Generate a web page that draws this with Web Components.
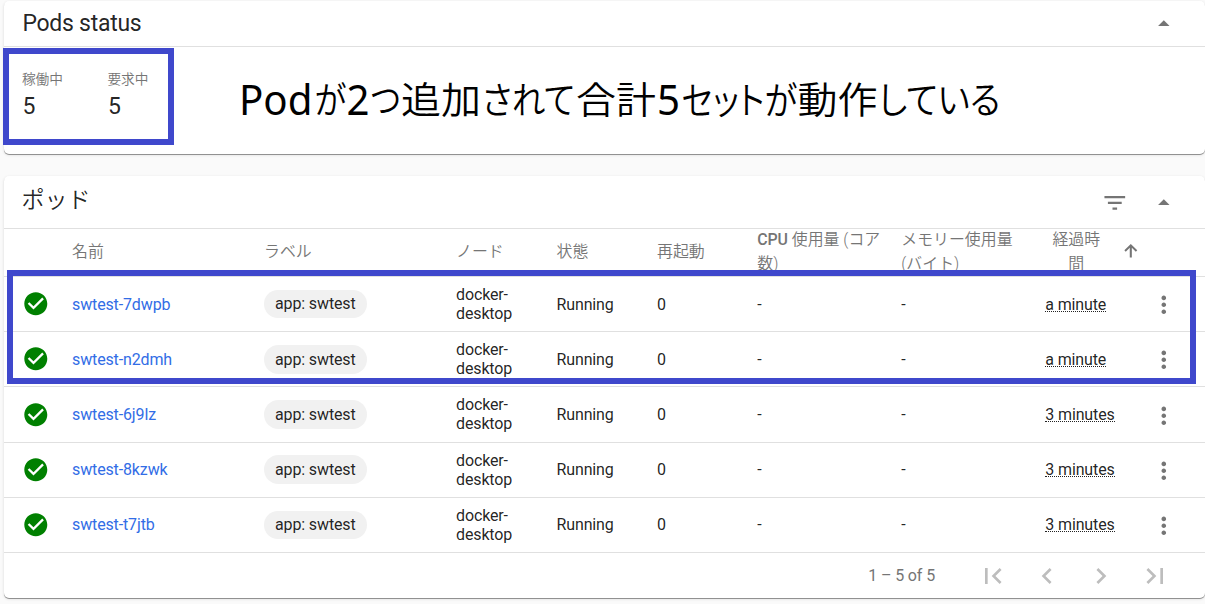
<!DOCTYPE html>
<html lang="ja">
<head>
<meta charset="utf-8">
<title>Pods</title>
<style>
html,body{margin:0;height:100%;overflow:hidden}
body{background:#fafafa;font-family:Roboto,"Noto Sans CJK JP",sans-serif;font-size:16px;letter-spacing:-.13px;color:rgba(0,0,0,.87)}
</style>
</head>
<body>
<kd-page></kd-page>
<script>
const define = (name, html, setup) => customElements.define(name, class extends HTMLElement {
  constructor() {
    super();
    this.attachShadow({mode: 'open'});
  }
  connectedCallback() {
    this.shadowRoot.innerHTML = html(this);
    if (setup) setup(this.shadowRoot);
  }
});

const ICONS = {
  check: 'M12 2C6.48 2 2 6.48 2 12s4.48 10 10 10 10-4.48 10-10S17.52 2 12 2zm-2 15l-5-5 1.41-1.41L10 14.17l7.59-7.59L19 8l-9 9z',
  up: 'M7 14l5-5 5 5z',
  filter: 'M10 18h4v-2h-4v2zM3 6v2h18V6H3zm3 7h12v-2H6v2z',
  more: 'M12 8c1.1 0 2-.9 2-2s-.9-2-2-2-2 .9-2 2 .9 2 2 2zm0 2c-1.1 0-2 .9-2 2s.9 2 2 2 2-.9 2-2-.9-2-2-2zm0 6c-1.1 0-2 .9-2 2s.9 2 2 2 2-.9 2-2-.9-2-2-2z',
  first: 'M18.41 16.59L13.82 12l4.59-4.59L17 6l-6 6 6 6zM6 6h2v12H6z',
  prev: 'M15.41 7.41L14 6l-6 6 6 6 1.41-1.41L10.83 12z',
  next: 'M10 6L8.59 7.41 13.17 12l-4.58 4.59L10 18l6-6z',
  last: 'M5.59 7.41L10.18 12l-4.59 4.59L7 18l6-6-6-6zM16 6h2v12h-2z',
  sort: 'M11.1 17.8V9.3L7.6 12.8 6.4 11.6 12 6l5.6 5.6-1.2 1.2-3.5-3.5v8.5z'
};

define('kd-icon', el => `<style>
:host{display:block;flex:none;width:var(--size,27.6px);height:var(--size,27.6px);color:#757575}
svg{display:block;width:100%;height:100%;fill:currentColor}
</style><svg viewBox="0 0 24 24"><path d="${ICONS[el.getAttribute('name')]}"/></svg>`);

define('kd-card', () => `<style>
:host{display:flex;flex-direction:column;box-sizing:border-box;background:#fff;border-radius:5px;position:relative;
box-shadow:0 1px 0 rgba(0,0,0,.36),0 1px 3px rgba(0,0,0,.14)}
header{display:flex;align-items:center;box-sizing:border-box;height:var(--head);padding:0 27.2px 0 18.4px;border-bottom:1px solid #e0e0e0}
h2{margin:0;flex:1;font-size:23px;font-weight:400;line-height:27px;letter-spacing:-.27px;padding-bottom:var(--lift,0px)}
.tools{display:flex;align-items:center;gap:21.5px;padding-top:var(--drop,0px)}
</style><header><h2><slot name="title"></slot></h2><div class="tools"><slot name="tools"></slot></div></header><slot></slot>`);

define('kd-stat', () => `<style>
:host{display:block;width:85.5px}
.l{font-size:13.7px;line-height:20px;color:#757575;font-weight:350;margin-left:-.5px;letter-spacing:0}
.v{font-size:23px;line-height:27px;margin-top:4px}
</style><div class="l"><slot name="label"></slot></div><div class="v"><slot></slot></div>`);

define('kd-frame', () => `<style>
:host{display:block;position:absolute;box-sizing:border-box;border:6px solid #3f48cc;pointer-events:none}
</style>`);

define('kd-chip', () => `<style>
:host{display:inline-block;vertical-align:middle;background:#f1f1f1;border-radius:15px;padding:.5px 11px 0;line-height:28px;white-space:nowrap}
</style><slot></slot>`);

const GRID = 'display:grid;grid-template-columns:48px 192px 192px 100.5px 100.5px 100.3px 144px 144px 105px 1fr;align-items:center;box-sizing:border-box;padding-left:20px;border-bottom:1px solid #e0e0e0;';

define('kd-head-row', () => `<style>
:host{${GRID}height:48px;flex:none;color:#757575;font-weight:350;line-height:24px;font-size:15.9px;letter-spacing:0}
b{font-weight:500;letter-spacing:-.1px}
span{margin-top:-2px}
.two{white-space:nowrap}
.age{width:62px;text-align:center}
kd-icon{margin-left:-33.5px;margin-top:-3px}
</style><span></span><span>名前</span><span>ラベル</span><span>ノード</span><span>状態</span><span>再起動</span>
<span class="two"><b>CPU</b> 使用量 (コア<br>数)</span><span class="two">メモリー使用量<br>(バイト)</span>
<span class="two age">経過時<br>間</span><kd-icon name="sort"></kd-icon>`);

define('kd-pod-row', el => `<style>
:host{${GRID}height:55.2px;flex:none;line-height:19px}
a{color:#326de6;text-decoration:none}
.ok{color:green;margin-left:-1.8px}
.age{justify-self:start;border-bottom:1px dotted #222;line-height:15px;height:14px;margin-top:.3px}
.more{margin-top:2px}
</style><kd-icon class="ok" name="check"></kd-icon><a>${el.getAttribute('pod')}</a><div><kd-chip>app: swtest</kd-chip></div>
<span>docker-<br>desktop</span><span>Running</span><span>0</span><span>-</span><span>-</span>
<span class="age">${el.getAttribute('age')}</span><kd-icon class="more" name="more"></kd-icon>`);

define('kd-pager', () => `<style>
:host{display:flex;align-items:center;justify-content:flex-end;flex:1;padding-right:34px;color:#757575}
.n{margin-right:42px}
kd-icon{--size:32px;color:#bdbdbd;margin-left:22px;margin-top:1px}
kd-icon:first-of-type{margin-left:0}
</style><span class="n">1 – 5 of 5</span><kd-icon name="first"></kd-icon><kd-icon name="prev"></kd-icon><kd-icon name="next"></kd-icon><kd-icon name="last"></kd-icon>`);

/* [text, start, width, is latin] for each run of the headline */
const RUNS = [['Pod', 239.5, 73.5, 1], ['が', 315, 31.5], ['2', 347, 23, 1], ['つ', 371, 30], ['追加', 401.5, 80], ['されて', 482.5, 93], ['合計', 576.5, 80], ['5', 657.5, 23, 1], ['セットが', 682, 115.5], ['動作', 798, 80], ['している', 879, 122]];
define('kd-note', () => `<style>
:host{display:block;letter-spacing:0}
svg{display:block;overflow:visible}
text{font:350 37.5px "Noto Sans CJK JP",sans-serif;font-feature-settings:"palt";fill:#000}
text.l{font:400 41px "Noto Sans","Open Sans",sans-serif}
</style><svg width="762" height="50" viewBox="239.5 74 762 50">${RUNS.map(r => `<text${r[3] ? ' class="l"' : ''}>${r[0]}</text>`).join('')}</svg>`,
root => root.querySelectorAll('text').forEach((t, i) => {
  const [, x, w, latin] = RUNS[i];
  t.setAttribute('transform', `translate(${x} ${latin ? 114.5 : 113.5}) scale(${w / t.getComputedTextLength()} 1)`);
}));

define('kd-page', () => `<style>
:host{display:flex;flex-direction:column;gap:22px;box-sizing:border-box;height:604px;padding:1px 0 6px 4px}
.status{height:153px;--head:46px}
.body{display:flex;align-items:flex-start;padding:22px 0 0 18.4px}
kd-note{margin:5px 0 0 46px}
.pods{height:422px;--head:53px;--lift:3px;--drop:1.5px}
.jp{font-weight:350;letter-spacing:0;margin-left:-1px}
.f1{left:-1px;top:47px;width:171px;height:97px}
.f2{left:3px;top:94px;width:1189px;height:114px}
</style>
<kd-card class="status"><span slot="title">Pods status</span><kd-icon slot="tools" name="up"></kd-icon>
<div class="body"><kd-stat><span slot="label">稼働中</span>5</kd-stat><kd-stat><span slot="label">要求中</span>5</kd-stat><kd-note></kd-note></div>
<kd-frame class="f1"></kd-frame></kd-card>
<kd-card class="pods"><span class="jp" slot="title">ポッド</span><kd-icon slot="tools" name="filter"></kd-icon><kd-icon slot="tools" name="up"></kd-icon>
<kd-head-row></kd-head-row>
<kd-pod-row pod="swtest-7dwpb" age="a minute"></kd-pod-row>
<kd-pod-row pod="swtest-n2dmh" age="a minute"></kd-pod-row>
<kd-pod-row pod="swtest-6j9lz" age="3 minutes"></kd-pod-row>
<kd-pod-row pod="swtest-8kzwk" age="3 minutes"></kd-pod-row>
<kd-pod-row pod="swtest-t7jtb" age="3 minutes"></kd-pod-row>
<kd-pager></kd-pager>
<kd-frame class="f2"></kd-frame></kd-card>`);
</script>
</body>
</html>
